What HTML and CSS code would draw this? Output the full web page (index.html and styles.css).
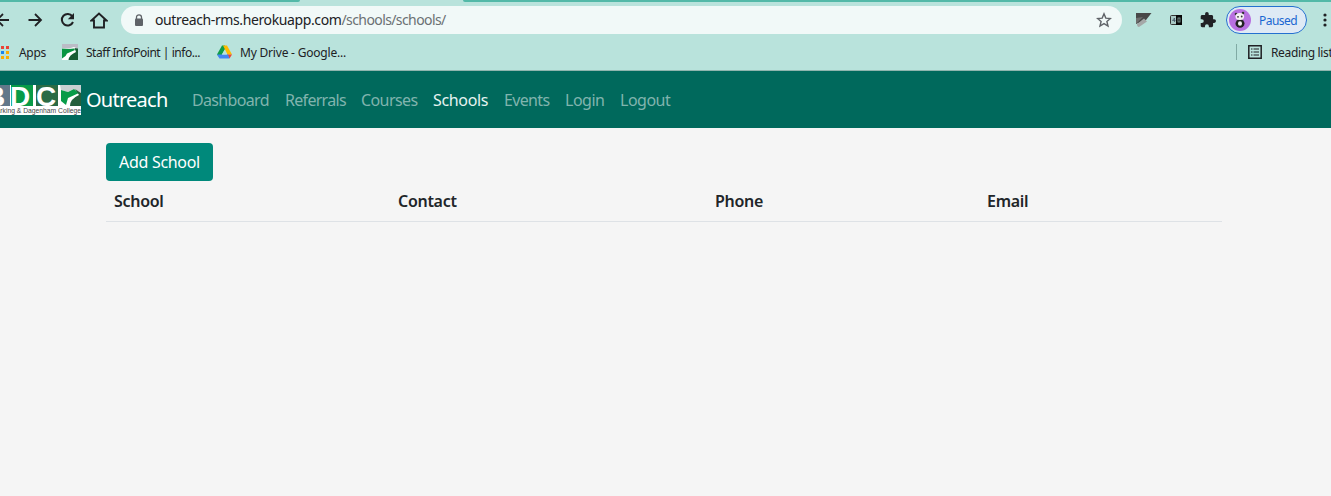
FILE: index.html
```html
<!DOCTYPE html>
<html lang="en">
<head>
<meta charset="utf-8">
<title>Outreach - Schools</title>
<link rel="stylesheet" href="styles.css">
</head>
<body>
<div class="browser">
  <div class="tabstrip"><i class="tab-left"></i><i class="tab-right"></i></div>
  <div class="toolbar">
    <svg class="back" width="16" height="16" viewBox="0 0 16 16"><path d="M14 8H2M8 2L2 8L8 14" fill="none" stroke="#202124" stroke-width="1.800"/></svg>
    <svg class="forward" width="16" height="16" viewBox="0 0 16 16"><path d="M1.500 8H14M8 2L14 8L8 14" fill="none" stroke="#202124" stroke-width="1.800"/></svg>
    <svg class="reload" width="16" height="16" viewBox="0 0 16 16"><path d="M12.300 4.200A5.800 5.800 0 1 0 13 10" fill="none" stroke="#202124" stroke-width="2"/><path d="M14 1V7.200H7.800Z" fill="#202124"/></svg>
    <svg class="home" width="18" height="18" viewBox="0 0 18 18"><path d="M1.500 9.500H4V16.500H14V9.500H16.500L9 2.500Z" fill="none" stroke="#202124" stroke-width="1.900"/></svg>
    <div class="omnibox">
      <svg class="lock" width="10" height="13" viewBox="0 0 10 13"><path d="M2.500 5V3.300A2.500 2.500 0 0 1 7.500 3.300V5" fill="none" stroke="#5f6368" stroke-width="1.300"/><rect x="1" y="4.500" width="8" height="7.500" rx="1" fill="#5f6368"/></svg>
      <span class="url">outreach-rms.herokuapp.com<span class="path">/schools/schools/</span></span>
      <svg class="star" width="16" height="16" viewBox="0 0 16 16"><path d="M8 1.800L9.800 6.100L14.400 6.500L10.900 9.500L12 14L8 11.600L4 14L5.100 9.500L1.600 6.500L6.200 6.100Z" fill="none" stroke="#5f6368" stroke-width="1.400"/></svg>
    </div>
    <svg class="ext-a" width="16" height="16" viewBox="0 0 16 16"><path d="M0 1H15.500L10 8L0 12Z" fill="#484848"/><path d="M0 6L7 5L0 12Z" fill="#6e6e6e"/><path d="M1 12L8 6.500L11 9.500L3 15Q1 15 1 12Z" fill="#a5a8a8"/></svg>
    <svg class="ext-b" width="12" height="10" viewBox="0 0 12 10"><rect x=".5" y=".5" width="11" height="9" rx="1" fill="#a8c9c4" stroke="#333"/><path d="M6 0H12V10H6Z" fill="#080808"/><path d="M4.500 7V3L2.500 5.500H5.500" stroke="#456" stroke-width=".8" fill="none"/><rect x="8" y="3" width="2" height="4" fill="none" stroke="#8caaa5" stroke-width=".8"/></svg>
    <svg class="puzzle" width="16" height="16" viewBox="1 1 22 22"><path d="M20.500 11H19V7c0-1.100-.9-2-2-2h-4V3.500a2.500 2.500 0 0 0-5 0V5H4c-1.100 0-2 .9-2 2v3.800h1.500a2.700 2.700 0 0 1 0 5.400H2V20c0 1.100.9 2 2 2h3.800v-1.500a2.700 2.700 0 0 1 5.400 0V22H17c1.100 0 2-.9 2-2v-4h1.500a2.500 2.500 0 0 0 0-5z" fill="#202124"/></svg>
    <div class="profile">
      <svg width="22" height="22" viewBox="0 0 22 22"><circle cx="11" cy="11" r="11" fill="#b870e0"/><circle cx="7" cy="5" r="1.300" fill="#333"/><circle cx="14" cy="4" r="1.300" fill="#333"/><ellipse cx="11" cy="14.500" rx="4.500" ry="4.300" fill="#222"/><ellipse cx="10.800" cy="7.500" rx="4.300" ry="3.600" fill="#f4f2f4"/><circle cx="9" cy="7.800" r=".9" fill="#333"/><circle cx="12.700" cy="7.500" r=".9" fill="#333"/><ellipse cx="11" cy="14.500" rx="2" ry="2.300" fill="#f4f2f4"/></svg>
      <span>Paused</span>
    </div>
    <svg class="dots" width="4" height="14" viewBox="0 0 4 14"><g fill="#202124"><circle cx="2" cy="2" r="1.600"/><circle cx="2" cy="7" r="1.600"/><circle cx="2" cy="12" r="1.600"/></g></svg>
  </div>
  <div class="bookmarks">
    <svg class="apps" width="9" height="13" viewBox="0 0 9 13"><g fill="#ea4335"><path d="M1 0h3v3h-3zM6 0h3v3h-3z"/></g><path d="M1 5h3v3h-3z" fill="#1a84f0"/><path d="M6 5h3v3h-3zM1 10h3v3h-3zM6 10h3v3h-3z" fill="#fbab05"/></svg>
    <span class="bm-apps">Apps</span>
    <svg class="road" width="16" height="16" viewBox="0 0 16 16"><path d="M0 0H16V16H0Z" fill="#fff"/><path d="M0 0H16V5L12 3L7 4.500L0 4Z" fill="#bbbcc6"/><path d="M0 4.500L7 5L12 4.500L13 6L5 9.500L3.500 12L0 14.500Z" fill="#079542"/><path d="M16 4.500V16H6.500Q7 11 14 8L12.500 4Z" fill="#175c34"/></svg>
    <span class="bm-staff">Staff InfoPoint | info...</span>
    <svg class="drive" width="15" height="14" viewBox="0 0 15 14"><path d="M5 0.500H8L8.500 3L3 13L0 9.500Z" fill="#109d48"/><path d="M6 .5H10L15 9.500H10.500Z" fill="#ffba00"/><path d="M10 9.500H15L12.500 13.500Z" fill="#ea4335"/><path d="M0 9.500H11L12.500 13.500H2.500Z" fill="#4285f4"/><path d="M7.500 5L10 9.500H5Z" fill="#b9e3dc"/></svg>
    <span class="bm-drive">My Drive - Google...</span>
    <i class="divider"></i>
    <svg class="list" width="14" height="14" viewBox="0 0 14 14"><path d="M.8.8H13.200V13.200H.8Z" fill="none" stroke="#202124" stroke-width="1.500"/><path d="M3 4H4.500M5.500 4H11M3 7H4.500M5.500 7H11M3 10H4.500M5.500 10H11" stroke="#202124" stroke-width="1.200"/></svg>
    <span class="bm-reading">Reading list</span>
  </div>
</div>
<nav class="navbar">
  <svg class="logo" width="81" height="30" viewBox="0 0 81 30">
    <path d="M0 0H81V30H0Z" fill="#fff"/>
    <path d="M0 0H10V21H0Z" fill="#62788a"/><path d="M11 0H33V21H11Z" fill="#079b48"/><path d="M36 0H58V21H36Z" fill="#2b6b45"/>
    <g class="logo-letters"><text x="-15" y="21">B</text><text x="10" y="21">D</text><text x="36" y="21">C</text></g>
    <path d="M60 0H81V8L74 4L68 7L61 5Z" fill="#c9cfd2"/><path d="M61 5L68 7L74 4L79 8L68 13L66 20L61 16Z" fill="#079b48"/><path d="M75 4L81 8V21H70Q70 14 79 10Z" fill="#245f3c"/>
    <text class="logo-name" x="-8" y="28" textLength="89" lengthAdjust="spacingAndGlyphs">Barking &amp; Dagenham College</text>
  </svg>
  <span class="brand">Outreach</span>
  <a class="link w-dashboard">Dashboard</a><a class="link w-referrals">Referrals</a><a class="link w-courses">Courses</a><a class="link w-schools active">Schools</a><a class="link w-events">Events</a><a class="link w-login">Login</a><a class="link">Logout</a>
</nav>
<main class="content">
  <button class="add">Add School</button>
  <table class="schools">
    <thead><tr><th class="col-school">School</th><th class="col-contact">Contact</th><th class="col-phone">Phone</th><th>Email</th></tr></thead>
  </table>
</main>
</body>
</html>
```

FILE: styles.css
```css
* { box-sizing: border-box; }
body { margin: 0; height: 496px; overflow: hidden; background: #f5f5f5; font-family: "Noto Sans", "Open Sans", sans-serif; color: #212529; }
svg { display: block; flex: none; }
span, a { white-space: nowrap; }
.browser { height: 71px; background: #b9e3dc; border-bottom: 1px solid #8fb5ae; overflow: hidden; }
.tabstrip { height: 2px; display: flex; justify-content: space-between; }
.tab-left { width: 300px; background: #53b9a8; border-bottom-right-radius: 3px; }
.tab-right { width: 868px; background: #53b9a8; border-bottom-left-radius: 3px; }
.toolbar { height: 36px; display: flex; align-items: center; }
.back { margin-left: -5px; }
.forward { margin-left: 16px; }
.reload { margin-left: 17px; }
.home { margin-left: 14px; }
.omnibox { width: 1001px; height: 28px; margin-left: 13px; border-radius: 14px; background: #f1f9f8; display: flex; align-items: center; flex: none; }
.lock { margin-left: 13px; }
.url { margin-left: 11px; width: 292px; font-size: 14px; letter-spacing: -.38px; color: #202124; line-height: 20px; }
.path { color: #6b7073; letter-spacing: -.6px; }
.star { margin-left: auto; margin-right: 10px; }
.ext-a { margin-left: 14px; }
.ext-b { margin-left: 18px; }
.puzzle { margin-left: 18px; }
.profile { width: 81px; height: 28px; margin-left: 10px; padding-left: 2px; border: 1px solid #2470d0; border-radius: 14px; background: #dfeaf5; display: flex; align-items: center; gap: 8px; flex: none; color: #1967d2; font-size: 12px; letter-spacing: -.55px; }
.dots { margin-left: 16px; }
.bookmarks { height: 28px; display: flex; align-items: center; font-size: 12px; letter-spacing: -.3px; color: #202124; }
.bm-apps { margin-left: 10px; width: 43px; }
.bm-staff { margin-left: 8px; width: 131px; letter-spacing: -.47px; }
.bm-drive { margin-left: 8px; letter-spacing: -.2px; }
.divider { width: 1px; height: 16px; background: #80aaa4; margin-left: auto; }
.list { margin-left: 11px; }
.bm-reading { margin-left: 9px; width: 60px; letter-spacing: -.35px; }
.navbar { height: 57px; background: #00695c; display: flex; align-items: center; }
.logo { overflow: hidden; margin-top: 1px; }
.logo-letters { font: bold 28px "Liberation Sans", sans-serif; fill: #fff; }
.logo-name { font: 7px "Liberation Sans", sans-serif; fill: #444; }
.brand { margin-left: 5px; width: 106px; font-size: 20px; letter-spacing: -.75px; color: #fff; }
.link { padding-top: 1px; font-size: 16px; letter-spacing: -.5px; color: #80b4ae; }
.link.active { color: #e6f3f1; letter-spacing: -.35px; }
.w-dashboard { width: 93px; letter-spacing: -.67px; }
.w-referrals { width: 76px; letter-spacing: -.7px; }
.w-courses { width: 72px; letter-spacing: -.6px; }
.w-schools { width: 71px; }
.w-events { width: 61px; letter-spacing: -.65px; }
.w-login { width: 55px; }
.content { width: 1116px; margin-left: 106px; padding-top: 15px; }
.add { display: block; width: 107px; height: 38px; border: 0; border-radius: 4px; padding: 0; background: #00897b; color: #fff; font: 16px "Noto Sans", sans-serif; letter-spacing: -.3px; white-space: nowrap; }
.schools { width: 1116px; table-layout: fixed; border-collapse: separate; border-spacing: 0; }
.schools th { text-align: left; padding: 8px; height: 41px; line-height: 24px; font-size: 16px; font-weight: 600; letter-spacing: -.3px; border-bottom: 1px solid #dee2e6; }
.col-school { width: 284px; }
.col-contact { width: 317px; }
.col-phone { width: 272px; }
```
